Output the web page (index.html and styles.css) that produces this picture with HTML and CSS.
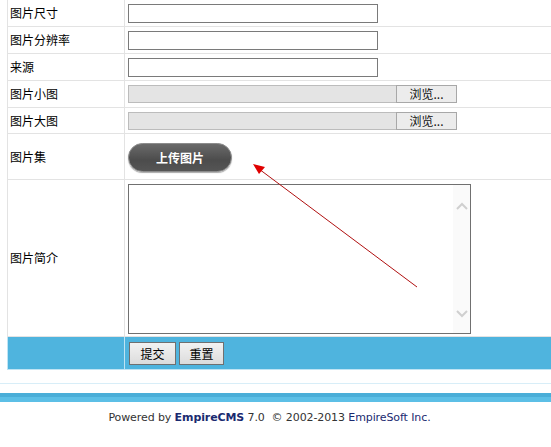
FILE: index.html
```html
<!DOCTYPE html>
<html>
<head>
<meta charset="utf-8">
<link rel="stylesheet" href="styles.css">
</head>
<body>
<div class="page">
  <table class="form">
    <tr class="r1">
      <td class="lbl">图片尺寸</td>
      <td class="val"><input class="txt" type="text"></td>
    </tr>
    <tr class="r1">
      <td class="lbl">图片分辨率</td>
      <td class="val"><input class="txt" type="text"></td>
    </tr>
    <tr class="r1">
      <td class="lbl">来源</td>
      <td class="val"><input class="txt" type="text"></td>
    </tr>
    <tr class="r1">
      <td class="lbl">图片小图</td>
      <td class="val"><div class="file"><span class="fpath"></span><span class="fbtn">浏览...</span></div></td>
    </tr>
    <tr class="r2">
      <td class="lbl">图片大图</td>
      <td class="val"><div class="file"><span class="fpath"></span><span class="fbtn">浏览...</span></div></td>
    </tr>
    <tr class="r3">
      <td class="lbl">图片集</td>
      <td class="val"><span class="upload">上传图片</span></td>
    </tr>
    <tr class="r4">
      <td class="lbl">图片简介</td>
      <td class="val">
        <div class="area">
          <div class="area-text"></div>
          <div class="sbar">
            <svg width="14" height="10" viewBox="0 0 14 10"><path d="M2 8 L7 3 L12 8" fill="none" stroke="#cfcfcf" stroke-width="2"/></svg>
            <svg width="14" height="10" viewBox="0 0 14 10"><path d="M2 2 L7 7 L12 2" fill="none" stroke="#cfcfcf" stroke-width="2"/></svg>
          </div>
        </div>
      </td>
    </tr>
    <tr class="r5">
      <td class="lbl"></td>
      <td class="val"><span class="btn">提交</span><span class="btn">重置</span></td>
    </tr>
  </table>
  <div class="sep"></div>
  <div class="bar"></div>
  <div class="footer">Powered by <b class="brand">EmpireCMS</b> 7.0&nbsp; © 2002-2013 <span class="soft">EmpireSoft Inc.</span></div>
  <svg class="arrow" width="551" height="447" viewBox="0 0 551 447">
    <line x1="417" y1="287" x2="259" y2="169" stroke="#b01010" stroke-width="1"/>
    <polygon points="253,164 265,167 259,174" fill="#e00000"/>
  </svg>
</div>
</body>
</html>
```

FILE: styles.css
```css
html, body {
  margin: 0;
  padding: 0;
  background: #fff;
}
.page {
  position: relative;
  width: 551px;
  height: 447px;
  overflow: hidden;
  font-family: "Noto Sans CJK SC", "Liberation Sans", sans-serif;
  font-size: 12px;
  color: #000;
}
.form {
  margin-left: 7px;
  width: 548px;
  border-collapse: collapse;
  margin-top: -1px;
}
.form td {
  border: 1px solid #e3e3e3;
  padding: 0 0 0 3px;
  vertical-align: middle;
}
.form .lbl {
  width: 114px;
  padding-left: 2px;
  font-size: 12px;
  line-height: 14px;
}
.r1 td { height: 26px; }
.r2 td { height: 25px; }
.r3 td { height: 45px; }
.r4 td { height: 156px; }
.r5 td {
  height: 32px;
  background: #4fb4de;
  border-color: #bfe4f4;
}
.txt {
  display: block;
  box-sizing: border-box;
  width: 250px;
  height: 19px;
  margin: 0;
  border: 1px solid #7a7a7a;
  padding: 0;
  background: #fff;
}
.file {
  display: flex;
  width: 329px;
  height: 18px;
  box-sizing: border-box;
}
.fpath {
  flex: 1;
  background: #e4e4e4;
  border: 1px solid #bcbcbc;
  border-right: none;
}
.fbtn {
  width: 61px;
  box-sizing: border-box;
  border: 1px solid #a8a8a8;
  background: #ececec;
  text-align: center;
  font-size: 12px;
  line-height: 15px;
  color: #111;
}
.upload {
  display: inline-block;
  box-sizing: border-box;
  width: 104px;
  height: 29px;
  border-radius: 15px;
  background: linear-gradient(#6a6a6a, #4c4c4c 60%, #555);
  border: 1px solid #8c8c8c;
  box-shadow: 0 1px 1px #aaa;
  color: #fff;
  font-weight: bold;
  font-size: 12px;
  text-align: center;
  line-height: 27px;
  margin-top: 1px;
}
.area {
  display: flex;
  box-sizing: border-box;
  width: 343px;
  height: 150px;
  border: 1px solid #707070;
  background: #fff;
  margin-top: 1px;
}
.area-text { flex: 1; }
.sbar {
  width: 17px;
  background: #fafafa;
  display: flex;
  flex-direction: column;
  justify-content: space-between;
  align-items: center;
  padding: 16px 0 14px;
}
.btn {
  display: inline-block;
  box-sizing: border-box;
  height: 23px;
  width: 47px;
  text-align: center;
  margin-right: 3px;
  border: 1px solid #707070;
  background: linear-gradient(#f2f2f2, #dcdcdc);
  font-size: 12px;
  line-height: 21px;
  color: #000;
  margin-top: 1px;
}
.btn + .btn { width: 45px; }
.r5 .val { padding-left: 4px; }
.sep {
  margin-top: 13px;
  height: 1px;
  background: #d8eef8;
}
.bar {
  margin-top: 9px;
  height: 4px;
  background: #4aaed8;
  border-bottom: 5px solid #5cbfe6;
}
.footer {
  margin-top: 9px;
  padding-right: 12px;
  text-align: center;
  font-family: "DejaVu Sans", sans-serif;
  font-size: 11px;
  color: #333;
  letter-spacing: -0.1px;
}
.brand {
  color: #1a2a70;
}
.soft {
  color: #1a2a70;
}
.arrow {
  position: absolute;
  left: 0;
  top: 0;
  pointer-events: none;
}
```
